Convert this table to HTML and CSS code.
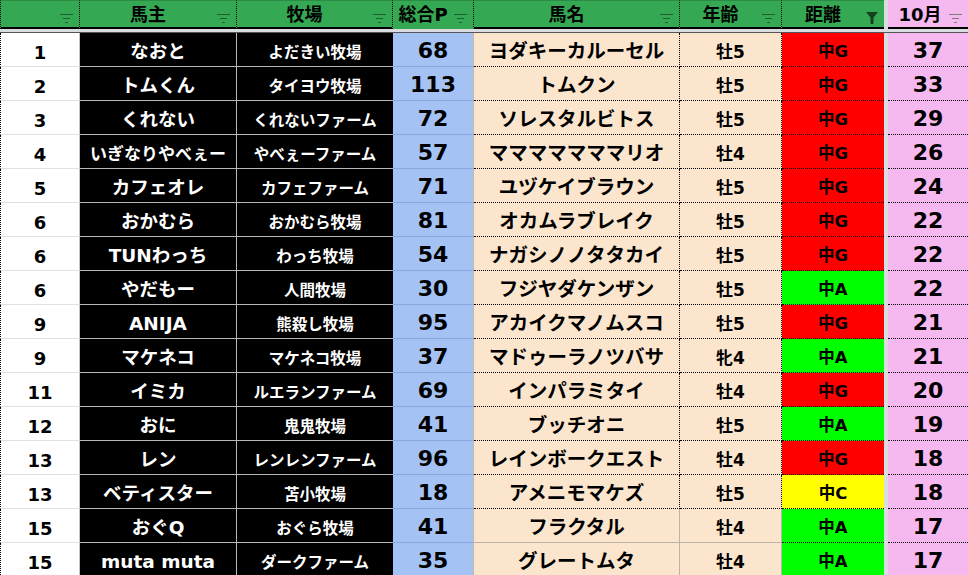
FILE: index.html
```html
<!DOCTYPE html>
<html lang="ja">
<head>
<meta charset="utf-8">
<title>Sheet</title>
<link rel="stylesheet" href="styles.css">
</head>
<body>
<div class="sheet">
  <div class="row head">
    <div class="h c-no"><span></span><svg class="flt" width="14" height="9" viewBox="0 0 14 9"><path d="M0 0.5h13M3 4.5h7M5 8.5h3" stroke="#1f5f31" stroke-width="1"/></svg></div>
    <div class="h c-own"><span>馬主</span><svg class="flt" width="14" height="9" viewBox="0 0 14 9"><path d="M0 0.5h13M3 4.5h7M5 8.5h3" stroke="#1f5f31" stroke-width="1"/></svg></div>
    <div class="h c-farm"><span>牧場</span><svg class="flt" width="14" height="9" viewBox="0 0 14 9"><path d="M0 0.5h13M3 4.5h7M5 8.5h3" stroke="#1f5f31" stroke-width="1"/></svg></div>
    <div class="h c-pt"><span>総合P</span><svg class="flt" width="14" height="9" viewBox="0 0 14 9"><path d="M0 0.5h13M3 4.5h7M5 8.5h3" stroke="#1f5f31" stroke-width="1"/></svg></div>
    <div class="h c-horse"><span>馬名</span><svg class="flt" width="14" height="9" viewBox="0 0 14 9"><path d="M0 0.5h13M3 4.5h7M5 8.5h3" stroke="#1f5f31" stroke-width="1"/></svg></div>
    <div class="h c-age"><span>年齢</span><svg class="flt" width="14" height="9" viewBox="0 0 14 9"><path d="M0 0.5h13M3 4.5h7M5 8.5h3" stroke="#1f5f31" stroke-width="1"/></svg></div>
    <div class="h c-dist"><span>距離</span><svg class="flt flt-on" width="12" height="12" viewBox="0 0 12 12"><path d="M0 0h12L7.5 5.5V12h-3V5.5z" fill="#17401f"/></svg></div>
    <div class="gap"></div>
    <div class="h c-oct"><span>10月</span><svg class="flt" width="14" height="9" viewBox="0 0 14 9"><path d="M0 0.5h13M3 4.5h7M5 8.5h3" stroke="#7d7d7d" stroke-width="1"/></svg></div>
  </div>
  <div class="band"></div>

  <div class="row"><div class="c c-no">1</div><div class="c c-own">なおと</div><div class="c c-farm">よだきい牧場</div><div class="c c-pt">68</div><div class="c c-horse">ヨダキーカルーセル</div><div class="c c-age">牡5</div><div class="c c-dist d-g">中G</div><div class="gap"></div><div class="c c-oct">37</div></div>
  <div class="row"><div class="c c-no">2</div><div class="c c-own">トムくん</div><div class="c c-farm">タイヨウ牧場</div><div class="c c-pt">113</div><div class="c c-horse">トムクン</div><div class="c c-age">牡5</div><div class="c c-dist d-g">中G</div><div class="gap"></div><div class="c c-oct">33</div></div>
  <div class="row"><div class="c c-no">3</div><div class="c c-own">くれない</div><div class="c c-farm">くれないファーム</div><div class="c c-pt">72</div><div class="c c-horse">ソレスタルビトス</div><div class="c c-age">牡5</div><div class="c c-dist d-g">中G</div><div class="gap"></div><div class="c c-oct">29</div></div>
  <div class="row"><div class="c c-no">4</div><div class="c c-own own-sm">いぎなりやべぇー</div><div class="c c-farm">やべぇーファーム</div><div class="c c-pt">57</div><div class="c c-horse">マママママママリオ</div><div class="c c-age">牡4</div><div class="c c-dist d-g">中G</div><div class="gap"></div><div class="c c-oct">26</div></div>
  <div class="row"><div class="c c-no">5</div><div class="c c-own">カフェオレ</div><div class="c c-farm">カフェファーム</div><div class="c c-pt">71</div><div class="c c-horse">ユヅケイブラウン</div><div class="c c-age">牡5</div><div class="c c-dist d-g">中G</div><div class="gap"></div><div class="c c-oct">24</div></div>
  <div class="row"><div class="c c-no">6</div><div class="c c-own">おかむら</div><div class="c c-farm">おかむら牧場</div><div class="c c-pt">81</div><div class="c c-horse">オカムラブレイク</div><div class="c c-age">牡5</div><div class="c c-dist d-g">中G</div><div class="gap"></div><div class="c c-oct">22</div></div>
  <div class="row"><div class="c c-no">6</div><div class="c c-own">TUNわっち</div><div class="c c-farm">わっち牧場</div><div class="c c-pt">54</div><div class="c c-horse">ナガシノノタタカイ</div><div class="c c-age">牡5</div><div class="c c-dist d-g">中G</div><div class="gap"></div><div class="c c-oct">22</div></div>
  <div class="row"><div class="c c-no">6</div><div class="c c-own">やだもー</div><div class="c c-farm">人間牧場</div><div class="c c-pt">30</div><div class="c c-horse">フジヤダケンザン</div><div class="c c-age">牡5</div><div class="c c-dist d-a">中A</div><div class="gap"></div><div class="c c-oct">22</div></div>
  <div class="row"><div class="c c-no">9</div><div class="c c-own">ANIJA</div><div class="c c-farm">熊殺し牧場</div><div class="c c-pt">95</div><div class="c c-horse">アカイクマノムスコ</div><div class="c c-age">牡5</div><div class="c c-dist d-g">中G</div><div class="gap"></div><div class="c c-oct">21</div></div>
  <div class="row"><div class="c c-no">9</div><div class="c c-own">マケネコ</div><div class="c c-farm">マケネコ牧場</div><div class="c c-pt">37</div><div class="c c-horse">マドゥーラノツバサ</div><div class="c c-age">牝4</div><div class="c c-dist d-a">中A</div><div class="gap"></div><div class="c c-oct">21</div></div>
  <div class="row"><div class="c c-no">11</div><div class="c c-own">イミカ</div><div class="c c-farm">ルエランファーム</div><div class="c c-pt">69</div><div class="c c-horse">インパラミタイ</div><div class="c c-age">牡4</div><div class="c c-dist d-g">中G</div><div class="gap"></div><div class="c c-oct">20</div></div>
  <div class="row"><div class="c c-no">12</div><div class="c c-own">おに</div><div class="c c-farm">鬼鬼牧場</div><div class="c c-pt">41</div><div class="c c-horse">ブッチオニ</div><div class="c c-age">牡5</div><div class="c c-dist d-a">中A</div><div class="gap"></div><div class="c c-oct">19</div></div>
  <div class="row"><div class="c c-no">13</div><div class="c c-own">レン</div><div class="c c-farm">レンレンファーム</div><div class="c c-pt">96</div><div class="c c-horse">レインボークエスト</div><div class="c c-age">牡4</div><div class="c c-dist d-g">中G</div><div class="gap"></div><div class="c c-oct">18</div></div>
  <div class="row"><div class="c c-no">13</div><div class="c c-own">ベティスター</div><div class="c c-farm">苫小牧場</div><div class="c c-pt">18</div><div class="c c-horse">アメニモマケズ</div><div class="c c-age">牡5</div><div class="c c-dist d-c">中C</div><div class="gap"></div><div class="c c-oct">18</div></div>
  <div class="row solid"><div class="c c-no">15</div><div class="c c-own">おぐQ</div><div class="c c-farm">おぐら牧場</div><div class="c c-pt">41</div><div class="c c-horse">フラクタル</div><div class="c c-age">牡4</div><div class="c c-dist d-a">中A</div><div class="gap"></div><div class="c c-oct">17</div></div>
  <div class="row solid"><div class="c c-no">15</div><div class="c c-own">muta muta</div><div class="c c-farm">ダークファーム</div><div class="c c-pt">35</div><div class="c c-horse">グレートムタ</div><div class="c c-age">牡4</div><div class="c c-dist d-a">中A</div><div class="gap"></div><div class="c c-oct">17</div></div>
</div>
</body>
</html>
```

FILE: styles.css
```css
* { box-sizing: border-box; }
html, body { margin: 0; padding: 0; background: #fff; overflow: hidden; }
body {
  font-family: "DejaVu Sans", "Noto Sans CJK JP", sans-serif;
  font-weight: bold;
  color: #000;
}
.sheet { width: 968px; height: 575px; overflow: hidden; }

.row {
  display: grid;
  grid-template-columns: 80px 157px 156px 81px 206px 102px 102px 4px 80px;
  height: 34px;
}
.gap { background: #dadce0; }

/* header */
.head { height: 29px; }
.h {
  position: relative;
  display: flex;
  align-items: center;
  justify-content: center;
  padding: 2px 20px 0 0;
  background: #34a853;
  border-right: 1px dotted #000;
  border-bottom: 2px solid #000;
  border-top: 1px solid #2b8c45;
  font-size: 18px;
  line-height: 1;
}
.h.c-no { border-left: 1px dotted #000; }
.h.c-pt { border-bottom-color: #34a853; }
.h.c-dist { border-right: none; }
.h.c-oct { background: #f5b8ef; border-right: none; border-top-color: #f5b8ef; padding-right: 16px; }
.flt { position: absolute; right: 5px; top: 13px; }
.flt-on { top: 11px; right: 6px; }
.band { height: 4px; background: #dadce0; border-bottom: 1px solid #555; }

/* body cells */
.c {
  display: flex;
  align-items: center;
  justify-content: center;
  padding-top: 6px;
  line-height: 1;
  white-space: nowrap;
  overflow: hidden;
}
.c.c-no {
  background: #fff;
  border-left: 1px dotted #000;
  border-right: 1px solid #c4c4c4;
  border-bottom: 1px solid #e1e1e1;
  font-size: 18px;
}
.c.c-own {
  background: #000;
  color: #fff;
  border-right: 1px solid #b8b8b8;
  border-bottom: 1px solid #b8b8b8;
  font-size: 18.5px;
}
.c.own-sm { font-size: 17px; }
.c.c-farm {
  background: #000;
  color: #fff;
  border-bottom: 1px solid #b8b8b8;
  font-size: 15.5px;
  padding-top: 8px;
}
.c.c-pt {
  background: #a4c2f4;
  border-bottom: 1px solid #8aa8dc;
  border-right: 1px solid #c7b9a8;
  font-size: 22px;
  padding-top: 2px;
}
.c.c-horse {
  background: #fce5cd;
  border-right: 1px dotted #000;
  border-bottom: 1px dotted #000;
  font-size: 19.5px;
  padding-top: 4px;
}
.c.c-age {
  background: #fce5cd;
  border-right: 1px dotted #000;
  border-bottom: 1px dotted #000;
  font-size: 17px;
  padding-top: 6px;
}
.c.c-dist {
  border-bottom: 1px dotted #000;
  font-size: 16.5px;
  padding-top: 6px;
}
.d-g { background: #ff0000; }
.d-a { background: #00ff00; }
.d-c { background: #ffff00; }
.c.c-oct {
  background: #f5b8ef;
  border-bottom: 1px dotted #000;
  font-size: 22px;
  padding-top: 2px;
}
.solid .c.c-horse,
.solid .c.c-age {
  border-right: 1px solid #bcb4ac;
  border-bottom: 1px solid #bcb4ac;
}
```
